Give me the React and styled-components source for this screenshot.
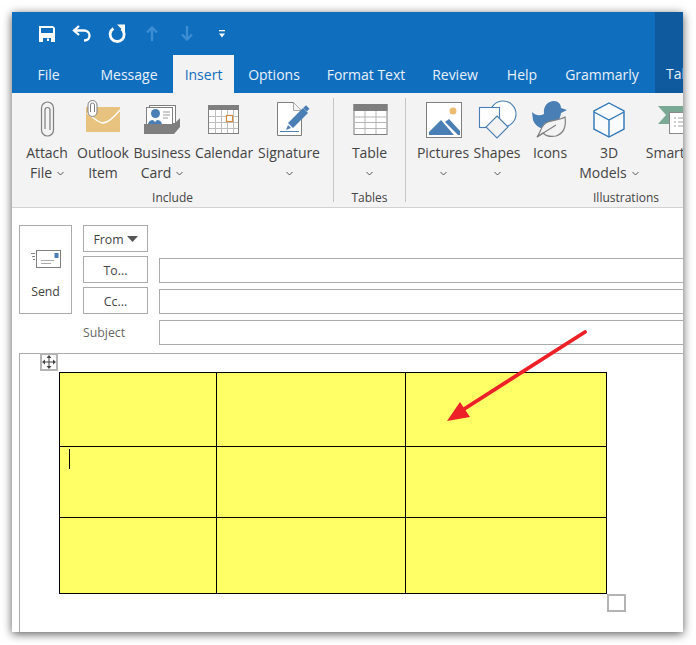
import React from "react";
import styled, { createGlobalStyle } from "styled-components";

const Global = createGlobalStyle`
  html, body { margin: 0; padding: 0; background: #fff; }
  body { font-family: "Open Sans", "Noto Sans", sans-serif; }
`;

const Page = styled.div`
  width: 696px;
  height: 645px;
  padding: 12px 13px 13px 12px;
  box-sizing: border-box;
  overflow: hidden;
`;
const Window = styled.div`
  position: relative;
  width: 671px;
  height: 620px;
  background: #fff;
  overflow: hidden;
  box-shadow: 0 2px 9px rgba(0, 0, 0, 0.65);
  display: flex;
  flex-direction: column;
`;
const Header = styled.header`
  display: flex;
  height: 81px;
  flex: none;
  background: #106ebe;
`;
const HeaderMain = styled.div`
  width: 643px;
  flex: none;
  display: flex;
  flex-direction: column;
`;
const Contextual = styled.div`
  flex: 1;
  min-width: 0;
  background: #0f5a9e;
  padding-top: 43px;
  padding-left: 11px;
  overflow: hidden;
`;
const QuickBar = styled.div`
  height: 43px;
  flex: none;
  padding: 0 0 0 17px;
  display: flex;
  align-items: center;
`;
const QuickSlot = styled.div`
  width: 35px;
  height: 40px;
  display: flex;
  align-items: center;
  justify-content: center;
`;
const Tabs = styled.nav`
  display: flex;
  height: 38px;
`;
const Tab = styled.div`
  width: ${(p) => p.$w}px;
  flex: none;
  display: flex;
  align-items: center;
  justify-content: center;
  font-size: 14px;
  color: ${(p) => (p.$active ? "#106ebe" : "#e9f1f9")};
  background: ${(p) => (p.$active ? "#f3f3f3" : "transparent")};
`;
const ContextTab = styled.div`
  font-size: 14px;
  line-height: 38px;
  color: #e9f1f9;
  white-space: nowrap;
`;

const Ribbon = styled.section`
  height: 114px;
  flex: none;
  display: flex;
  background: #f3f3f3;
  border-bottom: 1px solid #d2d2d2;
  box-sizing: content-box;
`;
const Group = styled.div`
  width: ${(p) => p.$w}px;
  flex: none;
  height: 114px;
  display: flex;
  flex-direction: column;
  padding-left: ${(p) => p.$pad || 0}px;
  box-sizing: border-box;
`;
const GroupButtons = styled.div`
  display: flex;
  height: 95px;
  flex: none;
`;
const GroupLabel = styled.div`
  margin-left: ${(p) => (p.$pad ? -p.$pad : 0)}px;
  text-align: center;
  font-size: 12px;
  line-height: 20px;
  color: #444;
`;
const Divider = styled.div`
  width: 1px;
  flex: none;
  height: 104px;
  margin-top: 5px;
  background: #c6c6c6;
`;
const RibbonButton = styled.div`
  width: ${(p) => p.$w}px;
  flex: none;
  display: flex;
  flex-direction: column;
  align-items: center;
  font-size: 14px;
  letter-spacing: -0.05px;
  line-height: 20px;
  color: #444;
  white-space: nowrap;
  svg { flex: none; }
`;
const ButtonLine = styled.div`
  height: 20px;
  display: flex;
  align-items: center;
  gap: 5px;
`;
const Chev = styled.svg`
  width: 7px;
  height: 5px;
  flex: none;
`;

const Compose = styled.section`
  display: flex;
  padding: 17px 0 0 7px;
  height: 145px;
  flex: none;
  box-sizing: border-box;
  gap: 11px;
`;
const SendButton = styled.div`
  width: 53px;
  height: 89px;
  box-sizing: border-box;
  border: 1px solid #ababab;
  display: flex;
  flex-direction: column;
  align-items: center;
  padding-top: 24px;
  gap: 15px;
  font-size: 12.3px;
  color: #444;
`;
const Fields = styled.div`
  flex: 1;
  display: grid;
  grid-template-columns: 65px 1fr;
  grid-auto-rows: 27px;
  column-gap: 11px;
  row-gap: 4px;
  min-width: 0;
`;
const FieldButton = styled.div`
  box-sizing: border-box;
  border: 1px solid #ababab;
  padding-top: 1px;
  display: flex;
  align-items: center;
  justify-content: center;
  gap: 3px;
  font-size: 12.3px;
  color: #444;
  background: #fff;
`;
const FieldLabel = styled.div`
  display: flex;
  align-items: center;
  padding-top: 1px;
  font-size: 12.3px;
  color: #666;
`;
const FieldInput = styled.div`
  box-sizing: border-box;
  align-self: end;
  height: 25px;
  margin-right: -12px;
  border: 1px solid #ababab;
  background: #fff;
`;
const Caret = styled.div`
  position: absolute;
  left: 9px;
  top: 2px;
  width: 1px;
  height: 20px;
  background: #000;
`;
const Editor = styled.section`
  flex: 1;
  margin-left: 7px;
  margin-right: -12px;
  border-top: 1px solid #ababab;
  border-left: 1px solid #ababab;
  padding: 18px 0 0 39px;
`;
const TableWrap = styled.div`
  position: relative;
  width: 547px;
`;
const DocTable = styled.table`
  border-collapse: collapse;
  table-layout: fixed;
  width: 547px;
`;
const DocCol = styled.col`
  width: ${(p) => p.$w}px;
`;
const DocRow = styled.tr`
  height: ${(p) => p.$h}px;
`;
const DocCell = styled.td`
  position: relative;
  padding: 0;
  border: 1px solid #000;
  background: #ffff66;
`;
const MoveHandle = styled.div`
  position: absolute;
  left: -19px;
  top: -19px;
  width: 18px;
  height: 18px;
  box-sizing: border-box;
  border: 2px solid #b4b4b4;
  background: #fff;
  display: flex;
  align-items: center;
  justify-content: center;
`;
const ResizeHandle = styled.div`
  position: absolute;
  left: 548px;
  bottom: -18px;
  width: 19px;
  height: 18px;
  box-sizing: border-box;
  border: 2px solid #b4b4b4;
  background: #fff;
`;
const Arrow = styled.svg`
  position: absolute;
  left: 408px;
  top: 298px;
  width: 190px;
  height: 130px;
  overflow: visible;
  pointer-events: none;
`;

const Ico = ({ cx, w = 48, children }) => (
  <svg width={w} height={50} viewBox={`${cx - w / 2} 93 ${w} 50`}>
    {children}
  </svg>
);

const Chevron = () => (
  <Chev viewBox="0 0 7 5">
    <path d="M0.5 1 L3.5 4 L6.5 1" fill="none" stroke="#555" strokeWidth="1" />
  </Chev>
);

const Btn = ({ w, cx, icon, iw, l1, l2, chev }) => (
  <RibbonButton $w={w}>
    <Ico cx={cx} w={iw}>{icon}</Ico>
    <ButtonLine>{l1}</ButtonLine>
    <ButtonLine>
      {l2}
      {chev && <Chevron />}
    </ButtonLine>
  </RibbonButton>
);

const paperclip = (
  <g fill="none" stroke="#7f7f7f" strokeWidth="1.2">
    <path d="M41.5 108 a6 6 0 0 1 12 0 V130 a6 6 0 0 1 -12 0 Z" />
    <path d="M45 129 V110 a2.5 2.5 0 0 1 5 0 V130" />
  </g>
);
const outlookItem = (
  <g>
    <rect x="86" y="107" width="34" height="25" fill="#e8c27f" />
    <path d="M87 113 C94 118 98 123 103 123 C109 123 115 116 120 110" fill="none" stroke="#fff" strokeWidth="1.3" />
    <path d="M88 105 a4.5 4.5 0 0 1 9 0 V112 a4.5 4.5 0 0 1 -9 0 Z" fill="#fff" stroke="#7f7f7f" strokeWidth="1" />
    <path d="M90.5 112 V105 a2 2 0 0 1 4 0 V112" fill="none" stroke="#7f7f7f" strokeWidth="1" />
  </g>
);
const businessCard = (
  <g>
    <rect x="149.5" y="105.5" width="26" height="18" fill="#fff" stroke="#7f7f7f" />
    <rect x="146.5" y="107.5" width="26" height="18" fill="#fff" stroke="#7f7f7f" />
    <circle cx="155.5" cy="113.5" r="4.5" fill="#4a7fb5" />
    <path d="M148 124 q1 -4 5 -4 l2 2 2 -2 q4 0 5 4 z" fill="#4a7fb5" />
    <path d="M163 112h7M163 115h7M163 118h5" stroke="#999" />
    <path d="M144 124 h30 l6 -6 v9 l-6 7 h-30 z" fill="#7f7f7f" />
  </g>
);
const calendar = (
  <g>
    <rect x="208.5" y="105.5" width="30" height="28" fill="#fff" stroke="#7f7f7f" />
    <path d="M215.5 110v23M221.5 110v23M227.5 110v23M233.5 110v23M209 116.5h29M209 122.5h29M209 128.5h29" stroke="#bdbdbd" />
    <rect x="208" y="105" width="31" height="5" fill="#7f7f7f" />
    <rect x="226.5" y="115.5" width="6" height="6" fill="#fff" stroke="#d68a3c" strokeWidth="1.2" />
  </g>
);
const signature = (
  <g>
    <path d="M277.5 102.5 H293.5 L301.5 110.5 V135.5 H277.5 Z" fill="#fff" stroke="#7f7f7f" />
    <path d="M293.5 102.5 V110.5 H301.5 Z" fill="#f3f3f3" stroke="#aaa" />
    <path d="M303 108 L308 113 L293 128 L288 123 Z" fill="#4a7fb5" />
    <path d="M288 125 L291 128 L286 130 Z" fill="#4a7fb5" />
    <rect x="304" y="106" width="5" height="4" transform="rotate(45 306 108)" fill="#4a7fb5" />
    <path d="M280 131.5 H299" stroke="#4a7fb5" />
  </g>
);
const tableIcon = (
  <g>
    <rect x="353.5" y="104.5" width="33" height="30" fill="#fff" stroke="#7f7f7f" />
    <path d="M364.5 111v23M375.5 111v23M354 117h32M354 122.5h32M354 128.5h32" stroke="#b5b5b5" />
    <rect x="353" y="104" width="34" height="7" fill="#7f7f7f" />
  </g>
);
const pictures = (
  <g>
    <rect x="426.5" y="102.5" width="35" height="35" fill="#fff" stroke="#7f7f7f" />
    <circle cx="453" cy="111" r="3.5" fill="#ecbc72" />
    <path d="M429 135 L429 132 L441 120 L454 135 Z" fill="#4a7fb5" />
    <path d="M445 122 L449 119 L460 131 V135 H458 Z" fill="#4a7fb5" />
  </g>
);
const shapes = (
  <g fill="none" stroke="#4a7fb5" strokeWidth="1.1">
    <circle cx="503" cy="114" r="13" fill="#fff" />
    <rect x="479.5" y="107.5" width="20" height="20" fill="#fff" />
    <path d="M497 116 L508 127 L497 138 L486 127 Z" fill="#f3f3f3" />
  </g>
);
const iconsIcon = (
  <g>
    <path d="M532 112 C536 116 540 116 544 114 C543 106 548 101 554 101 C558 101 561 104 561 108 L567 110 L561 113 C560 119 558 124 550 127 C545 131 536 128 533 120 Z" fill="#4a7fb5" />
    <path d="M537 137 C541 132 541 124 548 122 C553 120 560 120 565 117 C566 124 565 133 556 136 C551 137 546 136 543 133 Z" fill="#f3f3f3" stroke="#7f7f7f" strokeWidth="1.2" />
    <path d="M537 137 L556 125" stroke="#7f7f7f" strokeWidth="1.1" />
  </g>
);
const cube = (
  <g fill="none" stroke="#2e75b6" strokeWidth="1.4">
    <path d="M609 103 L624 111 V129 L609 137 L594 129 V111 Z" fill="#f9fbfd" />
    <path d="M594 112 L609 120 L624 112 M609 120 V137" />
  </g>
);
const smart = (
  <g>
    <path d="M658 106 H688 V124 H658 L666 115 Z" fill="#7aa996" />
    <rect x="669.5" y="112.5" width="22" height="21" fill="#fff" stroke="#8a8a8a" />
    <path d="M674 118h2M678 118h10M674 122h2M678 122h10M674 126h2M678 126h10" stroke="#a0a0a0" />
  </g>
);

const App = () => (
  <>
    <Global />
    <Page>
      <Window>
        <Header>
          <HeaderMain>
            <QuickBar>
              <QuickSlot>
                <svg width="16" height="16" viewBox="0 0 16 16">
                  <path d="M0 0h14l2 2v14H0z" fill="#fff" />
                  <rect x="2" y="2" width="12" height="5" fill="#106ebe" />
                  <rect x="4" y="12" width="8" height="4" fill="#106ebe" />
                  <rect x="8" y="12.5" width="2" height="2.5" fill="#fff" />
                </svg>
              </QuickSlot>
              <QuickSlot>
                <svg width="19" height="17" viewBox="0 0 19 17">
                  <path d="M7 1 L2 5.5 L7 10 M2 5.5 H12 C15.5 5.5 17.5 8 17.5 10.5 C17.5 13.5 15.5 15.5 12 15.5" fill="none" stroke="#fff" strokeWidth="2.3" />
                </svg>
              </QuickSlot>
              <QuickSlot>
                <svg width="18" height="19" viewBox="0 0 18 19">
                  <path d="M5.5 4.5 A7 7 0 1 0 13.5 5" fill="none" stroke="#fff" strokeWidth="2.8" />
                  <path d="M9 0.5 L17 0.5 L17 8.5 Z" fill="#fff" />
                </svg>
              </QuickSlot>
              <QuickSlot>
                <svg width="12" height="15" viewBox="0 0 12 15">
                  <path d="M1 6.5 L6 1.5 L11 6.5 M6 2 V15" fill="none" stroke="#3d8dd2" strokeWidth="2.4" />
                </svg>
              </QuickSlot>
              <QuickSlot>
                <svg width="12" height="15" viewBox="0 0 12 15">
                  <path d="M1 8.5 L6 13.5 L11 8.5 M6 13 V0" fill="none" stroke="#3d8dd2" strokeWidth="2.4" />
                </svg>
              </QuickSlot>
              <QuickSlot>
                <svg width="6" height="8" viewBox="0 0 6 8">
                  <rect x="0" y="0" width="6" height="1.3" fill="#fff" />
                  <path d="M0 3.5 H6 L3 7.5 Z" fill="#fff" />
                </svg>
              </QuickSlot>
            </QuickBar>
            <Tabs>
              <Tab $w={73}>File</Tab>
              <Tab $w={88}>Message</Tab>
              <Tab $w={61} $active>Insert</Tab>
              <Tab $w={80}>Options</Tab>
              <Tab $w={104}>Format Text</Tab>
              <Tab $w={74}>Review</Tab>
              <Tab $w={60}>Help</Tab>
              <Tab $w={100}>Grammarly</Tab>
            </Tabs>
          </HeaderMain>
          <Contextual>
            <ContextTab>Table</ContextTab>
          </Contextual>
        </Header>

        <Ribbon>
          <Group $w={321} $pad={7}>
            <GroupButtons>
              <Btn w={56} cx={47} icon={paperclip} l1="Attach" l2="File" chev />
              <Btn w={56} cx={103} icon={outlookItem} l1="Outlook" l2="Item" />
              <Btn w={62} cx={162} icon={businessCard} l1="Business" l2="Card" chev />
              <Btn w={62} cx={224} icon={calendar} l1="Calendar" />
              <Btn w={68} cx={289} icon={signature} l1="Signature" chev />
            </GroupButtons>
            <GroupLabel $pad={7}>Include</GroupLabel>
          </Group>
          <Divider />
          <Group $w={71}>
            <GroupButtons>
              <Btn w={71} cx={369.5} icon={tableIcon} l1="Table" chev />
            </GroupButtons>
            <GroupLabel>Tables</GroupLabel>
          </Group>
          <Divider />
          <Group $w={440} $pad={10}>
            <GroupButtons>
              <Btn w={54} cx={443} icon={pictures} l1="Pictures" chev />
              <Btn w={54} cx={497} icon={shapes} l1="Shapes" chev />
              <Btn w={52} cx={550} icon={iconsIcon} l1="Icons" />
              <Btn w={66} cx={609} icon={cube} l1="3D" l2="Models" chev />
              <Btn w={66} cx={675} iw={60} icon={smart} l1="SmartArt" />
            </GroupButtons>
            <GroupLabel $pad={10}>Illustrations</GroupLabel>
          </Group>
        </Ribbon>

        <Compose>
          <SendButton>
            <svg width="30" height="18" viewBox="0 0 30 18">
              <rect x="5.5" y="0.5" width="24" height="17" fill="#fff" stroke="#7f7f7f" />
              <rect x="23.5" y="3" width="4" height="5" fill="#4a7fb5" />
              <path d="M10 10.5h13M10 13.5h10" stroke="#aaa" />
              <path d="M0 3.5h4M1 6.5h3M2 9.5h2" stroke="#888" />
            </svg>
            Send
          </SendButton>
          <Fields>
            <FieldButton>
              From
              <svg width="11" height="6" viewBox="0 0 11 6">
                <path d="M0 0 H11 L5.5 6 Z" fill="#555" />
              </svg>
            </FieldButton>
            <div />
            <FieldButton>To...</FieldButton>
            <FieldInput />
            <FieldButton>Cc...</FieldButton>
            <FieldInput />
            <FieldLabel>Subject</FieldLabel>
            <FieldInput />
          </Fields>
        </Compose>

        <Editor>
          <TableWrap>
            <MoveHandle>
              <svg width="14" height="14" viewBox="0 0 14 14">
                <path d="M7 0 L9.5 3 H4.5 Z M7 14 L9.5 11 H4.5 Z M0 7 L3 4.5 V9.5 Z M14 7 L11 4.5 V9.5 Z" fill="#444" />
                <path d="M7 2 V12 M2 7 H12" stroke="#444" strokeWidth="1" />
              </svg>
            </MoveHandle>
            <DocTable>
              <colgroup>
                <DocCol $w={157} />
                <DocCol $w={189} />
                <DocCol $w={201} />
              </colgroup>
              <tbody>
                <DocRow $h={74}>
                  <DocCell /><DocCell /><DocCell />
                </DocRow>
                <DocRow $h={71}>
                  <DocCell><Caret /></DocCell><DocCell /><DocCell />
                </DocRow>
                <DocRow $h={76}>
                  <DocCell /><DocCell /><DocCell />
                </DocRow>
              </tbody>
            </DocTable>
            <ResizeHandle />
          </TableWrap>
        </Editor>

        <Arrow viewBox="420 310 190 130">
          <path d="M585 332 L461 411" stroke="#ed2027" strokeWidth="3.8" strokeLinecap="round" fill="none" />
          <path d="M447 421 L460 402 L470 417 Z" fill="#ed2027" />
        </Arrow>
      </Window>
    </Page>
  </>
);

export default App;
